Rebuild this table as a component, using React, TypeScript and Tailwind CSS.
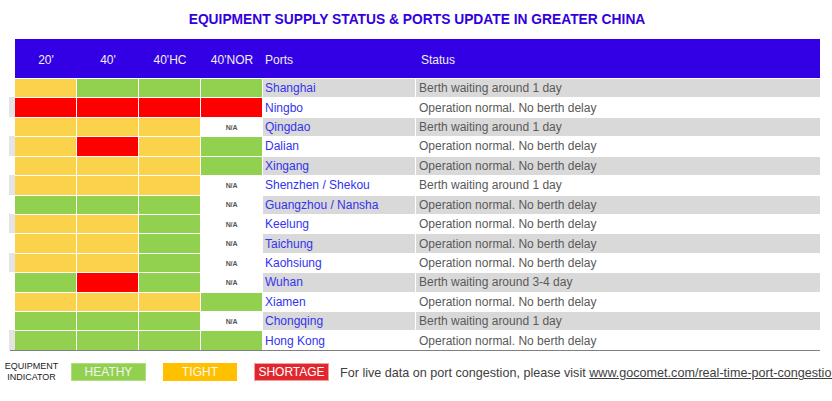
import React from "react";

type Cell = "Y" | "G" | "R" | "N";

type Row = {
  port: string;
  status: string;
  cells: Cell[];
  strip?: boolean;
};

const rows: Row[] = [
  { port: "Shanghai", status: "Berth waiting around 1 day", cells: ["Y", "G", "G", "G"] },
  { port: "Ningbo", status: "Operation normal. No berth delay", cells: ["R", "R", "R", "R"], strip: true },
  { port: "Qingdao", status: "Berth waiting around 1 day", cells: ["Y", "Y", "Y", "N"] },
  { port: "Dalian", status: "Operation normal. No berth delay", cells: ["Y", "R", "Y", "G"], strip: true },
  { port: "Xingang", status: "Operation normal. No berth delay", cells: ["Y", "Y", "Y", "G"] },
  { port: "Shenzhen / Shekou", status: "Berth waiting around 1 day", cells: ["Y", "Y", "Y", "N"], strip: true },
  { port: "Guangzhou / Nansha", status: "Operation normal. No berth delay", cells: ["G", "G", "G", "N"] },
  { port: "Keelung", status: "Operation normal. No berth delay", cells: ["Y", "Y", "G", "N"], strip: true },
  { port: "Taichung", status: "Operation normal. No berth delay", cells: ["Y", "Y", "G", "N"] },
  { port: "Kaohsiung", status: "Operation normal. No berth delay", cells: ["Y", "Y", "G", "N"], strip: true },
  { port: "Wuhan", status: "Berth waiting around 3-4 day", cells: ["G", "R", "G", "N"] },
  { port: "Xiamen", status: "Operation normal. No berth delay", cells: ["Y", "Y", "Y", "G"] },
  { port: "Chongqing", status: "Berth waiting around 1 day", cells: ["G", "G", "G", "N"] },
  { port: "Hong Kong", status: "Operation normal. No berth delay", cells: ["G", "G", "G", "G"], strip: true },
];

const cellClass: Record<Cell, string> = {
  Y: "bg-[#fad24c]",
  G: "bg-[#92d050]",
  R: "bg-[#ff0000]",
  N: "bg-white",
};

const EquipCell = ({ value }: { value: Cell }) => (
  <div className={`w-[61px] h-full flex items-center justify-center ${cellClass[value]}`}>
    {value === "N" && (
      <span className="text-[7px] font-bold text-[#555] leading-none tracking-tight">N/A</span>
    )}
  </div>
);

export default function App() {
  return (
    <div
      className="w-[832px] h-[401px] bg-white overflow-hidden"
      style={{ fontFamily: '"Liberation Sans", Arial, sans-serif' }}
    >
      <div className="h-[39px] flex items-center justify-center pl-[2px] pt-[1px]">
        <h1 className="text-[13.8px] font-bold text-[#3300dd]">
          EQUIPMENT SUPPLY STATUS &amp; PORTS UPDATE IN GREATER CHINA
        </h1>
      </div>

      <div className="pl-[9px] w-[820px]">
        {/* header */}
        <div className="flex h-[39px]">
          <div className="w-[6px]" />
          <div className="flex-1 flex bg-[#3300e6] text-[12px] text-[#f0f0f0] items-center pt-[3px]">
            <div className="w-[62px] text-center">20'</div>
            <div className="w-[62px] text-center">40'</div>
            <div className="w-[62px] text-center">40'HC</div>
            <div className="w-[62px] text-center">40'NOR</div>
            <div className="w-[154px] pl-[2px]">Ports</div>
            <div className="flex-1 pl-[4px]">Status</div>
          </div>
        </div>

        {/* rows */}
        <div className="flex flex-col">
          {rows.map((r, i) => {
            const grey = i % 2 === 0;
            return (
              <div key={r.port} className="flex h-[19.43px]">
                <div className={`w-[6px] ${r.strip ? "bg-[#e4e4e4]" : "bg-white"}`} />
                <div className="flex-1 flex gap-[1px] pt-[1px]">
                  {r.cells.map((c, j) => (
                    <EquipCell key={j} value={c} />
                  ))}
                  <div
                    className={`w-[152px] h-full flex items-center pl-[2px] text-[12px] text-[#3333ee] ${
                      grey ? "bg-[#d9d9d9]" : "bg-white"
                    }`}
                  >
                    {r.port}
                  </div>
                  <div
                    className={`flex-1 h-full flex items-center pl-[3px] text-[12px] text-[#595959] ${
                      grey ? "bg-[#d9d9d9]" : "bg-white"
                    }`}
                  >
                    {r.status}
                  </div>
                </div>
              </div>
            );
          })}
        </div>
        <div className="ml-[1px] h-[1px] bg-[#808080]" />
      </div>

      {/* legend */}
      <div className="flex items-center mt-[12px] h-[18px]">
        <div className="shrink-0 w-[62px] text-center text-[9px] leading-[11px] text-[#222] pl-[1px]">
          EQUIPMENT
          <br />
          INDICATOR
        </div>
        <div className="shrink-0 ml-[9px] w-[75px] h-[18px] bg-[#92d050] border border-[#b0dd82] flex items-center justify-center text-[12px] text-[#f4f4f4]">
          HEATHY
        </div>
        <div className="shrink-0 ml-[17px] w-[74px] h-[18px] bg-[#ffc000] flex items-center justify-center text-[12px] text-[#f8f8f8]">
          TIGHT
        </div>
        <div className="shrink-0 ml-[17px] w-[75px] h-[18px] bg-[#e1272d] border border-[#f0a0a0] flex items-center justify-center text-[12px] text-white">
          SHORTAGE
        </div>
        <div className="shrink-0 ml-[11px] text-[12.6px] text-[#404040] whitespace-nowrap pt-[4px]">
          For live data on port congestion, please visit{" "}
          <span className="underline">www.gocomet.com/real-time-port-congestion</span>
        </div>
      </div>
    </div>
  );
}
